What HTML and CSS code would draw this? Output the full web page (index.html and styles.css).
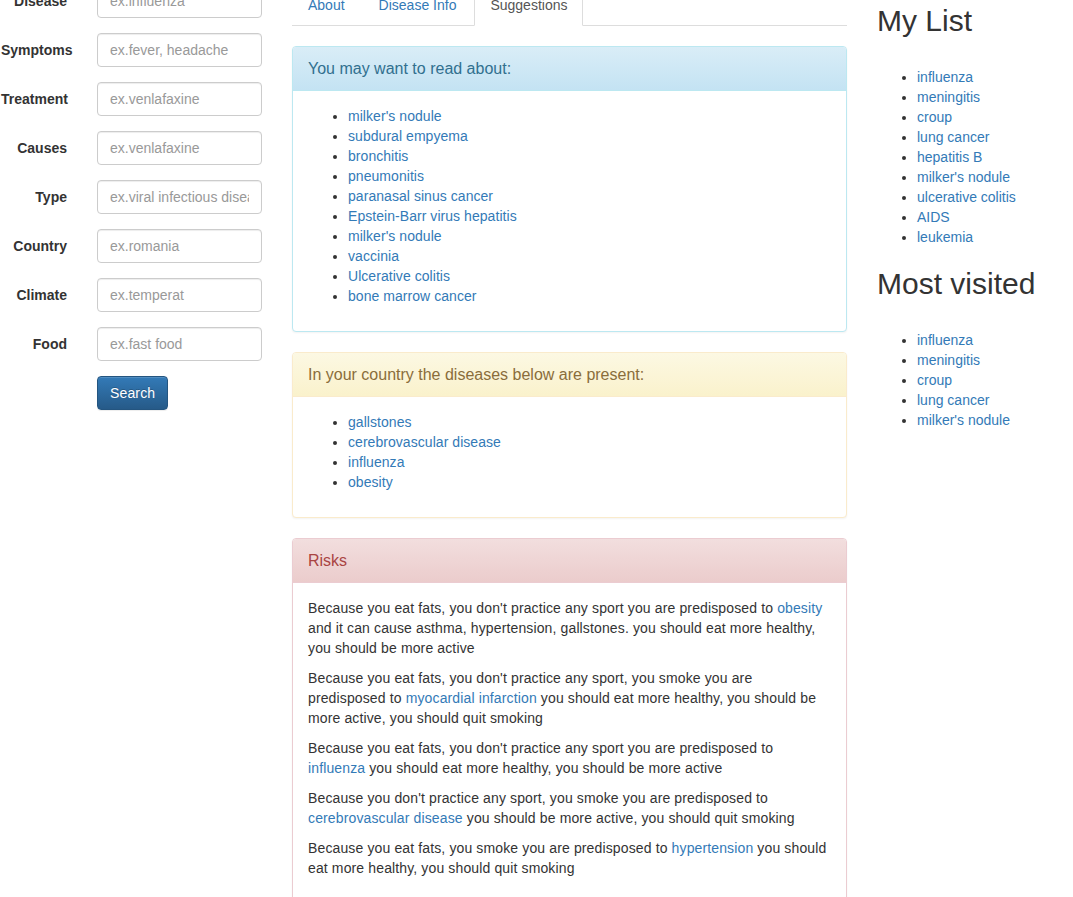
FILE: index.html
```html
<!DOCTYPE html>
<html lang="en">
<head>
<meta charset="utf-8">
<title>Suggestions</title>
<link rel="stylesheet" href="styles.css">
</head>
<body>
<div class="page">
  <form class="search-form">
    <div class="form-row"><label class="form-label">Disease</label><input class="form-input" type="text" placeholder="ex.influenza"></div>
    <div class="form-row"><label class="form-label">Symptoms</label><input class="form-input" type="text" placeholder="ex.fever, headache"></div>
    <div class="form-row"><label class="form-label">Treatment</label><input class="form-input" type="text" placeholder="ex.venlafaxine"></div>
    <div class="form-row"><label class="form-label">Causes</label><input class="form-input" type="text" placeholder="ex.venlafaxine"></div>
    <div class="form-row"><label class="form-label">Type</label><input class="form-input" type="text" placeholder="ex.viral infectious disease"></div>
    <div class="form-row"><label class="form-label">Country</label><input class="form-input" type="text" placeholder="ex.romania"></div>
    <div class="form-row"><label class="form-label">Climate</label><input class="form-input" type="text" placeholder="ex.temperat"></div>
    <div class="form-row"><label class="form-label">Food</label><input class="form-input" type="text" placeholder="ex.fast food"></div>
    <div class="form-row"><span class="form-label"></span><button class="btn-search" type="button">Search</button></div>
  </form>

  <main class="middle">
    <ul class="tabs">
      <li class="tab"><a class="tab-link" href="#">About</a></li>
      <li class="tab"><a class="tab-link" href="#">Disease Info</a></li>
      <li class="tab"><a class="tab-link active" href="#">Suggestions</a></li>
    </ul>
    <div class="tab-content">
      <section class="panel panel-info">
        <div class="panel-heading">You may want to read about:</div>
        <div class="panel-body">
          <ul class="link-list">
            <li><a href="#">milker's nodule</a></li>
            <li><a href="#">subdural empyema</a></li>
            <li><a href="#">bronchitis</a></li>
            <li><a href="#">pneumonitis</a></li>
            <li><a href="#">paranasal sinus cancer</a></li>
            <li><a href="#">Epstein-Barr virus hepatitis</a></li>
            <li><a href="#">milker's nodule</a></li>
            <li><a href="#">vaccinia</a></li>
            <li><a href="#">Ulcerative colitis</a></li>
            <li><a href="#">bone marrow cancer</a></li>
          </ul>
        </div>
      </section>
      <section class="panel panel-warning">
        <div class="panel-heading">In your country the diseases below are present:</div>
        <div class="panel-body">
          <ul class="link-list">
            <li><a href="#">gallstones</a></li>
            <li><a href="#">cerebrovascular disease</a></li>
            <li><a href="#">influenza</a></li>
            <li><a href="#">obesity</a></li>
          </ul>
        </div>
      </section>
      <section class="panel panel-danger">
        <div class="panel-heading">Risks</div>
        <div class="panel-body">
          <p class="risk">Because you eat fats, you don't practice any sport you are predisposed to <a href="#">obesity</a> and it can cause asthma, hypertension, gallstones. you should eat more healthy, you should be more active</p>
          <p class="risk">Because you eat fats, you don't practice any sport, you smoke you are predisposed to <a href="#">myocardial infarction</a> you should eat more healthy, you should be more active, you should quit smoking</p>
          <p class="risk">Because you eat fats, you don't practice any sport you are predisposed to <a href="#">influenza</a> you should eat more healthy, you should be more active</p>
          <p class="risk">Because you don't practice any sport, you smoke you are predisposed to <a href="#">cerebrovascular disease</a> you should be more active, you should quit smoking</p>
          <p class="risk">Because you eat fats, you smoke you are predisposed to <a href="#">hypertension</a> you should eat more healthy, you should quit smoking</p>
        </div>
      </section>
    </div>
  </main>

  <aside class="sidebar">
    <h2 class="side-title">My List</h2>
    <ul class="side-list">
      <li><a href="#">influenza</a></li>
      <li><a href="#">meningitis</a></li>
      <li><a href="#">croup</a></li>
      <li><a href="#">lung cancer</a></li>
      <li><a href="#">hepatitis B</a></li>
      <li><a href="#">milker's nodule</a></li>
      <li><a href="#">ulcerative colitis</a></li>
      <li><a href="#">AIDS</a></li>
      <li><a href="#">leukemia</a></li>
    </ul>
    <h2 class="side-title">Most visited</h2>
    <ul class="side-list">
      <li><a href="#">influenza</a></li>
      <li><a href="#">meningitis</a></li>
      <li><a href="#">croup</a></li>
      <li><a href="#">lung cancer</a></li>
      <li><a href="#">milker's nodule</a></li>
    </ul>
  </aside>
</div>
</body>
</html>
```
FILE: styles.css
```css
* { box-sizing: border-box; }
html, body { margin: 0; padding: 0; background: #fff; }
body {
  font-family: "Liberation Sans", Arial, Helvetica, sans-serif;
  font-size: 14px;
  line-height: 20px;
  color: #333;
}
a { color: #337ab7; text-decoration: none; }

.page {
  display: flex;
  align-items: flex-start;
  margin-top: -16px;
  padding-left: 1px;
}

/* left form */
.search-form { width: 261px; flex: none; }
.form-row { display: flex; margin-bottom: 15px; }
.form-label {
  width: 66px;
  flex: none;
  margin-right: 30px;
  padding-top: 7px;
  text-align: right;
  font-weight: bold;
  white-space: nowrap;
  line-height: 20px;
}
.form-input {
  width: 165px;
  height: 34px;
  padding: 6px 12px;
  font-family: inherit;
  font-size: 14px;
  line-height: 20px;
  color: #555;
  background: #fff;
  border: 1px solid #ccc;
  border-radius: 4px;
  box-shadow: inset 0 1px 1px rgba(0,0,0,.075);
}
.form-input::placeholder { color: #999; }
.btn-search {
  height: 34px;
  padding: 6px 12px;
  font-family: inherit;
  font-size: 14px;
  line-height: 20px;
  letter-spacing: 0.15px;
  color: #fff;
  background: linear-gradient(to bottom, #337ab7 0%, #265a88 100%);
  border: 1px solid #245580;
  border-radius: 4px;
  text-shadow: 0 -1px 0 rgba(0,0,0,.2);
  box-shadow: inset 0 1px 0 rgba(255,255,255,.15), 0 1px 1px rgba(0,0,0,.075);
}

/* middle */
.middle { width: 555px; flex: none; margin-left: 30px; }
.tabs {
  display: flex;
  list-style: none;
  margin: 0;
  padding: 0;
  border-bottom: 1px solid #ddd;
}
.tab { margin-bottom: -1px; }
.tab-link {
  display: block;
  margin-right: 2px;
  padding: 10px 15px;
  line-height: 20px;
  border: 1px solid transparent;
  border-radius: 4px 4px 0 0;
}
.tab-link.active {
  color: #555;
  background: #fff;
  border-color: #ddd #ddd transparent;
}
.tab-content { padding-top: 20px; }

.panel {
  margin-bottom: 20px;
  background: #fff;
  border: 1px solid #ddd;
  border-radius: 4px;
  box-shadow: 0 1px 2px rgba(0,0,0,.05);
}
.panel-heading {
  padding: 10px 15px;
  font-size: 16px;
  line-height: 23px;
  border-bottom: 1px solid transparent;
  border-radius: 3px 3px 0 0;
}
.panel-body { padding: 15px; }
.panel-info { border-color: #bce8f1; }
.panel-info .panel-heading {
  color: #31708f;
  background: linear-gradient(to bottom, #d9edf7 0%, #c4e3f3 100%);
  border-bottom-color: #bce8f1;
}
.panel-warning { border-color: #faebcc; }
.panel-warning .panel-heading {
  color: #8a6d3b;
  background: linear-gradient(to bottom, #fcf8e3 0%, #faf2cc 100%);
  border-bottom-color: #faebcc;
}
.panel-danger { border-color: #ebccd1; }
.panel-danger .panel-heading {
  color: #a94442;
  background: linear-gradient(to bottom, #f2dede 0%, #ebcccc 100%);
  border-bottom-color: #ebccd1;
}
.link-list { margin: 0 0 10px; padding-left: 40px; letter-spacing: 0.05px; }
.risk { margin: 0 0 10px; letter-spacing: 0.13px; }

/* sidebar */
.sidebar { flex: 1; margin-left: 30px; }
.side-title {
  margin: 20px 0 10px;
  font-size: 30px;
  font-weight: 500;
  line-height: 33px;
  color: #333;
}
.side-list { margin: 30px 0 10px; padding-left: 40px; }
```
